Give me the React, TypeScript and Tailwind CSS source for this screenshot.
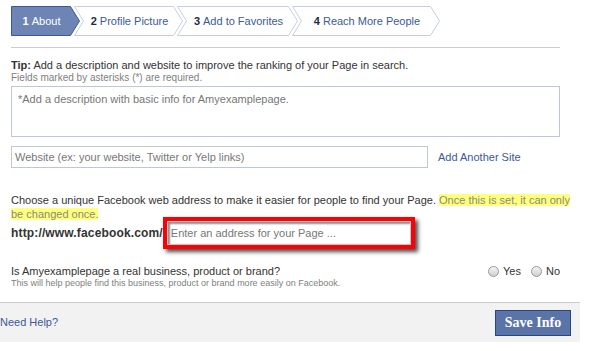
import React from 'react'

const tabs = [
  { n: '1', label: 'About', w: 69, active: true },
  { n: '2', label: 'Profile Picture', w: 109, active: false },
  { n: '3', label: 'Add to Favorites', w: 121, active: false },
  { n: '4', label: 'Reach More People', w: 148, active: false },
]

function Tab({ n, label, w, active, first }: { n: string; label: string; w: number; active: boolean; first: boolean }) {
  const d = first
    ? `M0.5,0.5 L${w - 9.5},0.5 L${w - 0.5},15 L${w - 9.5},29.5 L0.5,29.5 Z`
    : `M0.5,0.5 L${w - 9.5},0.5 L${w - 0.5},15 L${w - 9.5},29.5 L0.5,29.5 L9.5,15 Z`
  return (
    <div className={`relative h-[30px] shrink-0 ${first ? '' : '-ml-[6px]'}`} style={{ width: w }}>
      <svg className="absolute inset-0" width={w} height={30}>
        <path d={d} fill={active ? '#6d84b4' : '#ffffff'} stroke={active ? '#3b5998' : '#c6cee0'} strokeWidth={1} />
      </svg>
      <div
        className={`relative flex h-full items-center justify-center text-[11px] ${first ? 'pr-[8px]' : 'pl-[2px]'} ${
          active ? 'text-white' : 'text-[#3b5998]'
        }`}
      >
        <span className={`font-bold mr-[3px] ${active ? 'text-white' : 'text-[#1c2a47]'}`}>{n}</span>
        {label}
      </div>
    </div>
  )
}

export default function App() {
  return (
    <div className="relative w-[590px] h-[351px] bg-white overflow-hidden font-['Liberation_Sans',Arial,sans-serif] text-[#333]">
      <div className="flex pt-[6px] pl-[11px]">
        {tabs.map((t, i) => (
          <Tab key={t.n} {...t} first={i === 0} />
        ))}
      </div>
      <div className="mx-[11px] mt-[11px] w-[549px] border-t border-[#cccccc]" />

      <div className="px-[11px]">
        <p className="mt-[10px] text-[11px] leading-[14px]">
          <span className="font-bold">Tip:</span> Add a description and website to improve the ranking of your Page in search.
        </p>
        <p className="text-[10px] leading-[11px] text-[#808080]">Fields marked by asterisks (*) are required.</p>

        <div className="mt-[3px] h-[51px] w-[549px] border border-[#bdc7d8] px-[6px] pt-[4px] text-[11px] text-[#777]">
          *Add a description with basic info for Amyexamplepage.
        </div>

        <div className="mt-[9px] flex items-center">
          <div className="flex h-[22px] w-[417px] items-center border border-[#bdc7d8] px-[3px] text-[11px] text-[#777]">
            Website (ex: your website, Twitter or Yelp links)
          </div>
          <span className="ml-[10px] text-[11px] text-[#3b5998]">Add Another Site</span>
        </div>

        <div className="mt-[25px] text-[11px] leading-[14px]">
          <p className="whitespace-nowrap">
            Choose a unique Facebook web address to make it easier for people to find your Page.{' '}
            <span className="bg-[#ffff80] text-[#8c8c70]">Once this is set, it can only</span>
          </p>
          <p>
            <span className="bg-[#ffff80] text-[#8c8c70]">be changed once.</span>
          </p>
        </div>

        <div className="flex items-center">
          <span className="text-[12px] font-bold tracking-[0.15px] text-[#333]">http://www.facebook.com/</span>
          <div className="-my-[4px] border-[4px] border-[#ff0000] shadow-[3px_3px_4px_rgba(0,0,0,0.7)]">
            <div className="flex h-[24px] w-[244px] items-center border border-[#bdc7d8] bg-white px-[3px] text-[11px] text-[#777] shadow-[inset_2px_2px_2px_rgba(0,0,0,0.45)]">
              Enter an address for your Page ...
            </div>
          </div>
        </div>

        <div className="mt-[19px] flex items-start">
          <div className="flex-1">
            <p className="text-[11px] leading-[14px]">Is Amyexamplepage a real business, product or brand?</p>
            <p className="text-[9px] leading-[11px] text-[#808080]">
              This will help people find this business, product or brand more easily on Facebook.
            </p>
          </div>
          <div className="mr-[19px] flex items-center text-[11px] leading-[14px]">
            <span className="mr-[4px] inline-block h-[11px] w-[11px] rounded-full border border-[#999] bg-gradient-to-b from-[#f4f4f4] to-[#cfcfcf]" />
            Yes
            <span className="ml-[10px] mr-[4px] inline-block h-[11px] w-[11px] rounded-full border border-[#999] bg-gradient-to-b from-[#f4f4f4] to-[#cfcfcf]" />
            No
          </div>
        </div>
      </div>

      <div className="mt-[13px] flex h-[40px] w-[580px] items-center justify-between border-t border-[#cccccc] bg-[#f2f2f2] pr-[9px]">
        <span className="text-[11px] text-[#3b5998]">Need Help?</span>
        <button className="h-[26px] w-[76px] border border-[#29447e] bg-[#5b74a8] font-['Liberation_Serif',serif] text-[14px] font-bold text-white">
          Save Info
        </button>
      </div>
    </div>
  )
}
